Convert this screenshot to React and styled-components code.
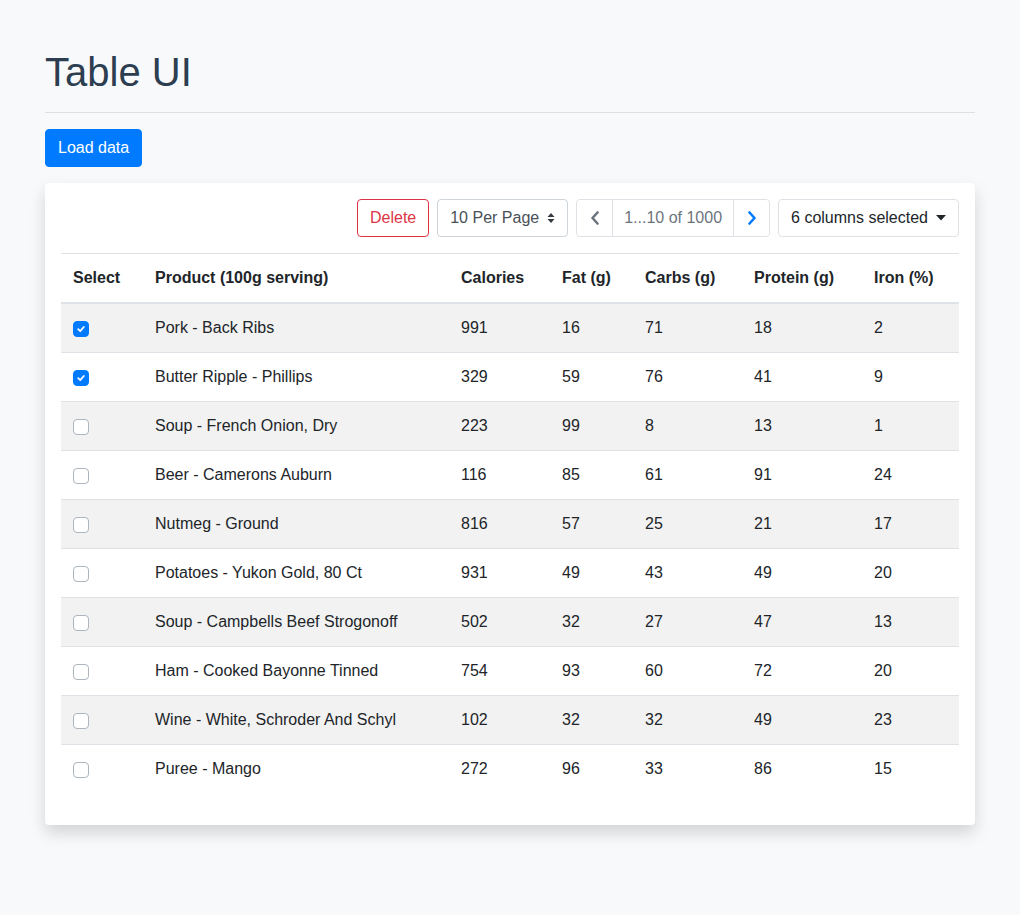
import React, { useState } from 'react';
import styled, { createGlobalStyle } from 'styled-components';

const GlobalStyle = createGlobalStyle`
  body {
    margin: 0;
    background: #f8f9fa;
    font-family: "Liberation Sans", Arial, sans-serif;
    font-size: 16px;
    line-height: 1.5;
    color: #212529;
  }
  * {
    box-sizing: border-box;
  }
`;

const rows = [
  ['Pork - Back Ribs', 991, 16, 71, 18, 2, true],
  ['Butter Ripple - Phillips', 329, 59, 76, 41, 9, true],
  ['Soup - French Onion, Dry', 223, 99, 8, 13, 1, false],
  ['Beer - Camerons Auburn', 116, 85, 61, 91, 24, false],
  ['Nutmeg - Ground', 816, 57, 25, 21, 17, false],
  ['Potatoes - Yukon Gold, 80 Ct', 931, 49, 43, 49, 20, false],
  ['Soup - Campbells Beef Strogonoff', 502, 32, 27, 47, 13, false],
  ['Ham - Cooked Bayonne Tinned', 754, 93, 60, 72, 20, false],
  ['Wine - White, Schroder And Schyl', 102, 32, 32, 49, 23, false],
  ['Puree - Mango', 272, 96, 33, 86, 15, false]
];

const columns = [
  { label: 'Select', width: 82 },
  { label: 'Product (100g serving)', width: 306 },
  { label: 'Calories', width: 101 },
  { label: 'Fat (g)', width: 83 },
  { label: 'Carbs (g)', width: 109 },
  { label: 'Protein (g)', width: 120 },
  { label: 'Iron (%)', width: 97 }
];

const ChevronLeft = () => (
  <svg width="10" height="14" viewBox="0 0 10 14">
    <path d="M7.5 1.5 L2.5 7 L7.5 12.5" fill="none" stroke="currentColor" strokeWidth="2.6" strokeLinecap="round" strokeLinejoin="round" />
  </svg>
);

const ChevronRight = () => (
  <svg width="10" height="14" viewBox="0 0 10 14">
    <path d="M2.5 1.5 L7.5 7 L2.5 12.5" fill="none" stroke="currentColor" strokeWidth="2.6" strokeLinecap="round" strokeLinejoin="round" />
  </svg>
);

const SortArrows = () => (
  <svg width="8" height="12" viewBox="0 0 8 12">
    <path d="M4 1 L7.5 5 H0.5 Z M4 11 L0.5 7 H7.5 Z" fill="#343a40" />
  </svg>
);

const Caret = () => (
  <svg width="10" height="6" viewBox="0 0 10 6">
    <path d="M0 0 H10 L5 5.5 Z" fill="#212529" />
  </svg>
);

const CheckIcon = () => (
  <svg width="10" height="10" viewBox="0 0 10 10">
    <path d="M2.2 5.2 L4.2 7.1 L7.8 3" fill="none" stroke="#fff" strokeWidth="1.8" strokeLinecap="round" strokeLinejoin="round" />
  </svg>
);

const App = () => {
  const [checked, setChecked] = useState(rows.map(r => r[6]));

  const toggle = i => {
    const next = [...checked];
    next[i] = !next[i];
    setChecked(next);
  };

  return (
    <>
      <GlobalStyle />
      <Page>
        <Title>Table UI</Title>
        <Rule />
        <PrimaryButton>Load data</PrimaryButton>
        <Card>
          <Toolbar>
            <OutlineDanger>Delete</OutlineDanger>
            <SelectBox>
              10 Per Page <SortArrows />
            </SelectBox>
            <Pager>
              <PagerButton disabled>
                <ChevronLeft />
              </PagerButton>
              <PagerInfo>1...10 of 1000</PagerInfo>
              <PagerButton>
                <ChevronRight />
              </PagerButton>
            </Pager>
            <DropdownButton>
              6 columns selected <Caret />
            </DropdownButton>
          </Toolbar>
          <Table>
            <colgroup>
              {columns.map(c => (
                <col key={c.label} style={{ width: c.width }} />
              ))}
            </colgroup>
            <thead>
              <tr>
                {columns.map(c => (
                  <Th key={c.label}>{c.label}</Th>
                ))}
              </tr>
            </thead>
            <tbody>
              {rows.map((r, i) => (
                <Tr key={r[0]} striped={i % 2 === 0 ? 1 : 0}>
                  <Td>
                    <Check checked={checked[i] ? 1 : 0} onClick={() => toggle(i)}>
                      {checked[i] && <CheckIcon />}
                    </Check>
                  </Td>
                  {r.slice(0, 6).map((v, j) => (
                    <Td key={j}>{v}</Td>
                  ))}
                </Tr>
              ))}
            </tbody>
          </Table>
        </Card>
      </Page>
    </>
  );
};

const Page = styled.div`
  width: 930px;
  margin: 0 auto;
  padding: 48px 0 90px;
`;

const Title = styled.h1`
  margin: 0 0 16px;
  font-size: 40px;
  font-weight: 400;
  line-height: 1.2;
  color: #2c3e50;
`;

const Rule = styled.hr`
  margin: 0 0 16px;
  border: 0;
  border-top: 1px solid rgba(0, 0, 0, 0.1);
`;

const BaseButton = styled.button`
  display: inline-flex;
  align-items: center;
  height: 38px;
  padding: 6px 12px;
  font-family: inherit;
  font-size: 16px;
  line-height: 24px;
  border-radius: 4px;
  border: 1px solid transparent;
  background: #fff;
  cursor: pointer;
`;

const PrimaryButton = styled(BaseButton)`
  background: #007bff;
  border-color: #007bff;
  color: #fff;
  padding: 6px 12px;
`;

const Card = styled.div`
  margin-top: 16px;
  background: #fff;
  border-radius: 4px;
  box-shadow: 0 0.5rem 1rem rgba(0, 0, 0, 0.15);
  padding: 16px 16px 16px;
`;

const Toolbar = styled.div`
  display: flex;
  justify-content: flex-end;
  gap: 8px;
  margin-bottom: 16px;
`;

const OutlineDanger = styled(BaseButton)`
  color: #dc3545;
  border-color: #dc3545;
`;

const SelectBox = styled(BaseButton)`
  color: #495057;
  border-color: #ced4da;
  gap: 8px;
  padding-right: 12px;
`;

const Pager = styled.div`
  display: flex;
  height: 38px;
  border: 1px solid #dee2e6;
  border-radius: 4px;
`;

const PagerButton = styled.button`
  width: 35px;
  display: flex;
  align-items: center;
  justify-content: center;
  background: #fff;
  border: 0;
  padding: 0;
  color: ${p => (p.disabled ? '#6c757d' : '#007bff')};
  cursor: pointer;
  border-radius: 4px;
`;

const PagerInfo = styled.span`
  display: flex;
  align-items: center;
  padding: 0 11px;
  color: #6c757d;
  border-left: 1px solid #dee2e6;
  border-right: 1px solid #dee2e6;
`;

const DropdownButton = styled(BaseButton)`
  color: #212529;
  border-color: #dee2e6;
  gap: 8px;
`;

const Table = styled.table`
  width: 100%;
  border-collapse: collapse;
  table-layout: fixed;
  margin-bottom: 16px;
  border-top: 1px solid #dee2e6;
`;

const Th = styled.th`
  text-align: left;
  font-weight: 700;
  padding: 12px;
  line-height: 24px;
  border-bottom: 2px solid #dee2e6;
`;

const Tr = styled.tr`
  background: ${p => (p.striped ? '#f2f2f2' : 'transparent')};
`;

const Td = styled.td`
  padding: 12px;
  line-height: 24px;
  border-top: 1px solid #dee2e6;
  white-space: nowrap;
  vertical-align: middle;
`;

const Check = styled.span`
  display: flex;
  align-items: center;
  justify-content: center;
  width: 16px;
  height: 16px;
  margin-top: 1px;
  border-radius: 4px;
  cursor: pointer;
  background: ${p => (p.checked ? '#007bff' : '#fff')};
  border: 1px solid ${p => (p.checked ? '#007bff' : '#adb5bd')};
`;

export default App;
